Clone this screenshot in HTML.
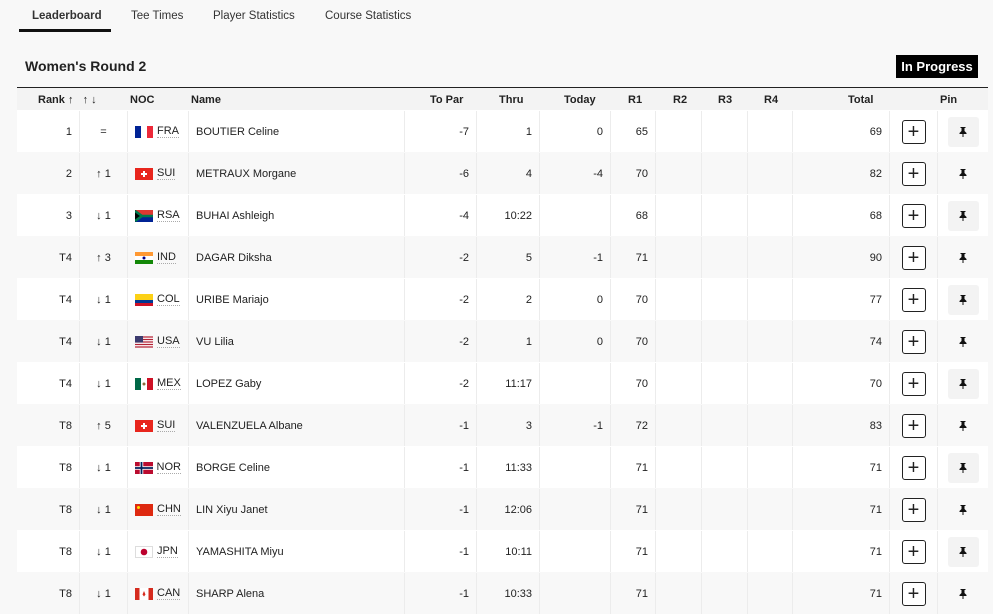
<!DOCTYPE html>
<html><head><meta charset="utf-8"><style>
*{margin:0;padding:0;box-sizing:border-box}
body{width:993px;height:614px;background:#f8f8f8;font-family:"Liberation Sans",sans-serif;color:#222;font-size:11px;position:relative;overflow:hidden}
.tab{position:absolute;top:9px;font-size:11.5px;color:#333}
.a{position:absolute}
.row{position:absolute;left:17px;width:971px;height:42px;display:grid;grid-template-columns:63px 48px 61px 216px 72px 63px 71px 45px 46px 46px 45px 97px 48px 50px;padding-top:1px}
.row>div{border-right:1px solid #ececec;display:flex;align-items:center;padding:0 7px;justify-content:flex-end}
.row>div:last-child{border-right:none}
.w{background:#fff}
.row .l{justify-content:flex-start}
.row .c{justify-content:center}
.noc{justify-content:flex-start!important;padding-left:7px!important}
.noc svg{margin-right:4px}
.noc span{border-bottom:1px dotted #aaa;line-height:12px}
.plus{width:24px;height:24px;border:1.5px solid #222;border-radius:3px;display:flex;align-items:center;justify-content:center;font-size:20px;line-height:1;background:#fff}
.pin{width:31px;height:30px;border-radius:3px;display:flex;align-items:center;justify-content:center}
.w .pin{background:#f3f3f3}
.h{position:absolute;top:94px;font-weight:bold;font-size:11px;color:#222}
</style></head><body>
<svg width="0" height="0" style="position:absolute"><symbol id="p" viewBox="0 0 8 10"><path d="M1.5 0H6.5V1H5.5V4L7.5 6V7H0.5V6L2.5 4V1H1.5Z" fill="#111"/><rect x="3.5" y="7" width="1" height="3" fill="#111"/></symbol></svg>
<div class="tab" style="left:32px;top:10px;font-weight:bold">Leaderboard</div>
<div class="a" style="left:19px;top:29px;width:92px;height:3px;background:#111"></div>
<div class="tab" style="left:131px;top:10px">Tee Times</div>
<div class="tab" style="left:213px;top:10px">Player Statistics</div>
<div class="tab" style="left:325px;top:10px">Course Statistics</div>
<div class="a" style="left:25px;top:58px;font-size:14px;font-weight:bold">Women's Round 2</div>
<div class="a" style="left:896px;top:55px;width:82px;height:23px;background:#000;color:#fff;font-weight:bold;font-size:13px;line-height:23px;text-align:center">In Progress</div>
<div class="a" style="left:17px;top:87px;width:971px;height:1px;background:#222"></div>
<div class="a" style="left:17px;top:88px;width:971px;height:22px;background:#f3f3f3"></div>
<div class="h" style="left:38px">Rank ↑ &nbsp; ↑ ↓</div>
<div class="h" style="left:130px">NOC</div>
<div class="h" style="left:191px">Name</div>
<div class="h" style="left:430px">To Par</div>
<div class="h" style="left:499px">Thru</div>
<div class="h" style="left:564px">Today</div>
<div class="h" style="left:628px">R1</div>
<div class="h" style="left:673px">R2</div>
<div class="h" style="left:718px">R3</div>
<div class="h" style="left:764px">R4</div>
<div class="h" style="left:848px">Total</div>
<div class="h" style="left:940px">Pin</div>

<div class="row w" style="top:110px"><div>1</div><div class="c">=</div><div class="noc"><svg width="18" height="12"><rect width="6" height="12" fill="#002395"/><rect x="6" width="6" height="12" fill="#fff"/><rect x="12" width="6" height="12" fill="#ed2939"/></svg><span>FRA</span></div><div class="l">BOUTIER Celine</div><div>-7</div><div>1</div><div>0</div><div>65</div><div></div><div></div><div></div><div>69</div><div class="c"><div class="plus">+</div></div><div class="c"><div class="pin"><svg width="8" height="10"><use href="#p"/></svg></div></div></div>

<div class="row" style="top:152px"><div>2</div><div class="c">↑ 1</div><div class="noc"><svg width="18" height="12"><rect width="18" height="12" fill="#e8261d"/><rect x="8" y="3" width="2" height="6" fill="#fff"/><rect x="6" y="5" width="6" height="2" fill="#fff"/></svg><span>SUI</span></div><div class="l">METRAUX Morgane</div><div>-6</div><div>4</div><div>-4</div><div>70</div><div></div><div></div><div></div><div>82</div><div class="c"><div class="plus">+</div></div><div class="c"><div class="pin"><svg width="8" height="10"><use href="#p"/></svg></div></div></div>

<div class="row w" style="top:194px"><div>3</div><div class="c">↓ 1</div><div class="noc"><svg width="18" height="12"><rect width="18" height="6" fill="#de3831"/><rect y="6" width="18" height="6" fill="#002395"/><path d="M0 0L8 6L0 12Z" fill="#000"/><path d="M0 1L7 6L0 11M7 6H18" stroke="#007a4d" stroke-width="2.5" fill="none"/></svg><span>RSA</span></div><div class="l">BUHAI Ashleigh</div><div>-4</div><div>10:22</div><div></div><div>68</div><div></div><div></div><div></div><div>68</div><div class="c"><div class="plus">+</div></div><div class="c"><div class="pin"><svg width="8" height="10"><use href="#p"/></svg></div></div></div>

<div class="row" style="top:236px"><div>T4</div><div class="c">↑ 3</div><div class="noc"><svg width="18" height="12"><rect width="18" height="4" fill="#f93"/><rect y="4" width="18" height="4" fill="#fff"/><rect y="8" width="18" height="4" fill="#138808"/><circle cx="9" cy="6" r="1.5" fill="#008"/></svg><span>IND</span></div><div class="l">DAGAR Diksha</div><div>-2</div><div>5</div><div>-1</div><div>71</div><div></div><div></div><div></div><div>90</div><div class="c"><div class="plus">+</div></div><div class="c"><div class="pin"><svg width="8" height="10"><use href="#p"/></svg></div></div></div>

<div class="row w" style="top:278px"><div>T4</div><div class="c">↓ 1</div><div class="noc"><svg width="18" height="12"><rect width="18" height="6" fill="#fcd116"/><rect y="6" width="18" height="3" fill="#003893"/><rect y="9" width="18" height="3" fill="#ce1126"/></svg><span>COL</span></div><div class="l">URIBE Mariajo</div><div>-2</div><div>2</div><div>0</div><div>70</div><div></div><div></div><div></div><div>77</div><div class="c"><div class="plus">+</div></div><div class="c"><div class="pin"><svg width="8" height="10"><use href="#p"/></svg></div></div></div>

<div class="row" style="top:320px"><div>T4</div><div class="c">↓ 1</div><div class="noc"><svg width="18" height="12"><rect width="18" height="12" fill="#fff"/><path d="M0 1H18M0 3.5H18M0 6H18M0 8.5H18M0 11H18" stroke="#b22234" stroke-width="1.3"/><rect width="8" height="6.5" fill="#3c3b6e"/></svg><span>USA</span></div><div class="l">VU Lilia</div><div>-2</div><div>1</div><div>0</div><div>70</div><div></div><div></div><div></div><div>74</div><div class="c"><div class="plus">+</div></div><div class="c"><div class="pin"><svg width="8" height="10"><use href="#p"/></svg></div></div></div>

<div class="row w" style="top:362px"><div>T4</div><div class="c">↓ 1</div><div class="noc"><svg width="18" height="12"><rect width="6" height="12" fill="#006847"/><rect x="6" width="6" height="12" fill="#fff"/><rect x="12" width="6" height="12" fill="#ce1126"/><circle cx="9" cy="6" r="1.5" fill="#8b6a3a"/></svg><span>MEX</span></div><div class="l">LOPEZ Gaby</div><div>-2</div><div>11:17</div><div></div><div>70</div><div></div><div></div><div></div><div>70</div><div class="c"><div class="plus">+</div></div><div class="c"><div class="pin"><svg width="8" height="10"><use href="#p"/></svg></div></div></div>

<div class="row" style="top:404px"><div>T8</div><div class="c">↑ 5</div><div class="noc"><svg width="18" height="12"><rect width="18" height="12" fill="#e8261d"/><rect x="8" y="3" width="2" height="6" fill="#fff"/><rect x="6" y="5" width="6" height="2" fill="#fff"/></svg><span>SUI</span></div><div class="l">VALENZUELA Albane</div><div>-1</div><div>3</div><div>-1</div><div>72</div><div></div><div></div><div></div><div>83</div><div class="c"><div class="plus">+</div></div><div class="c"><div class="pin"><svg width="8" height="10"><use href="#p"/></svg></div></div></div>

<div class="row w" style="top:446px"><div>T8</div><div class="c">↓ 1</div><div class="noc"><svg width="18" height="12"><rect width="18" height="12" fill="#ba0c2f"/><path d="M0 6H18M6.5 0V12" stroke="#fff" stroke-width="3.5"/><path d="M0 6H18M6.5 0V12" stroke="#00205b" stroke-width="1.8"/></svg><span>NOR</span></div><div class="l">BORGE Celine</div><div>-1</div><div>11:33</div><div></div><div>71</div><div></div><div></div><div></div><div>71</div><div class="c"><div class="plus">+</div></div><div class="c"><div class="pin"><svg width="8" height="10"><use href="#p"/></svg></div></div></div>

<div class="row" style="top:488px"><div>T8</div><div class="c">↓ 1</div><div class="noc"><svg width="18" height="12"><rect width="18" height="12" fill="#de2910"/><circle cx="3.5" cy="3.5" r="1.5" fill="#ffde00"/></svg><span>CHN</span></div><div class="l">LIN Xiyu Janet</div><div>-1</div><div>12:06</div><div></div><div>71</div><div></div><div></div><div></div><div>71</div><div class="c"><div class="plus">+</div></div><div class="c"><div class="pin"><svg width="8" height="10"><use href="#p"/></svg></div></div></div>

<div class="row w" style="top:530px"><div>T8</div><div class="c">↓ 1</div><div class="noc"><svg width="18" height="12"><rect x=".5" y=".5" width="17" height="11" fill="#fff" stroke="#ddd"/><circle cx="9" cy="6" r="3.3" fill="#bc002d"/></svg><span>JPN</span></div><div class="l">YAMASHITA Miyu</div><div>-1</div><div>10:11</div><div></div><div>71</div><div></div><div></div><div></div><div>71</div><div class="c"><div class="plus">+</div></div><div class="c"><div class="pin"><svg width="8" height="10"><use href="#p"/></svg></div></div></div>

<div class="row" style="top:572px"><div>T8</div><div class="c">↓ 1</div><div class="noc"><svg width="18" height="12"><rect width="18" height="12" fill="#fff"/><rect width="4.5" height="12" fill="#d52b1e"/><rect x="13.5" width="4.5" height="12" fill="#d52b1e"/><path d="M9 3L10.5 6.5L9 8.5L7.5 6.5Z" fill="#d52b1e"/></svg><span>CAN</span></div><div class="l">SHARP Alena</div><div>-1</div><div>10:33</div><div></div><div>71</div><div></div><div></div><div></div><div>71</div><div class="c"><div class="plus">+</div></div><div class="c"><div class="pin"><svg width="8" height="10"><use href="#p"/></svg></div></div></div>
</body></html>
